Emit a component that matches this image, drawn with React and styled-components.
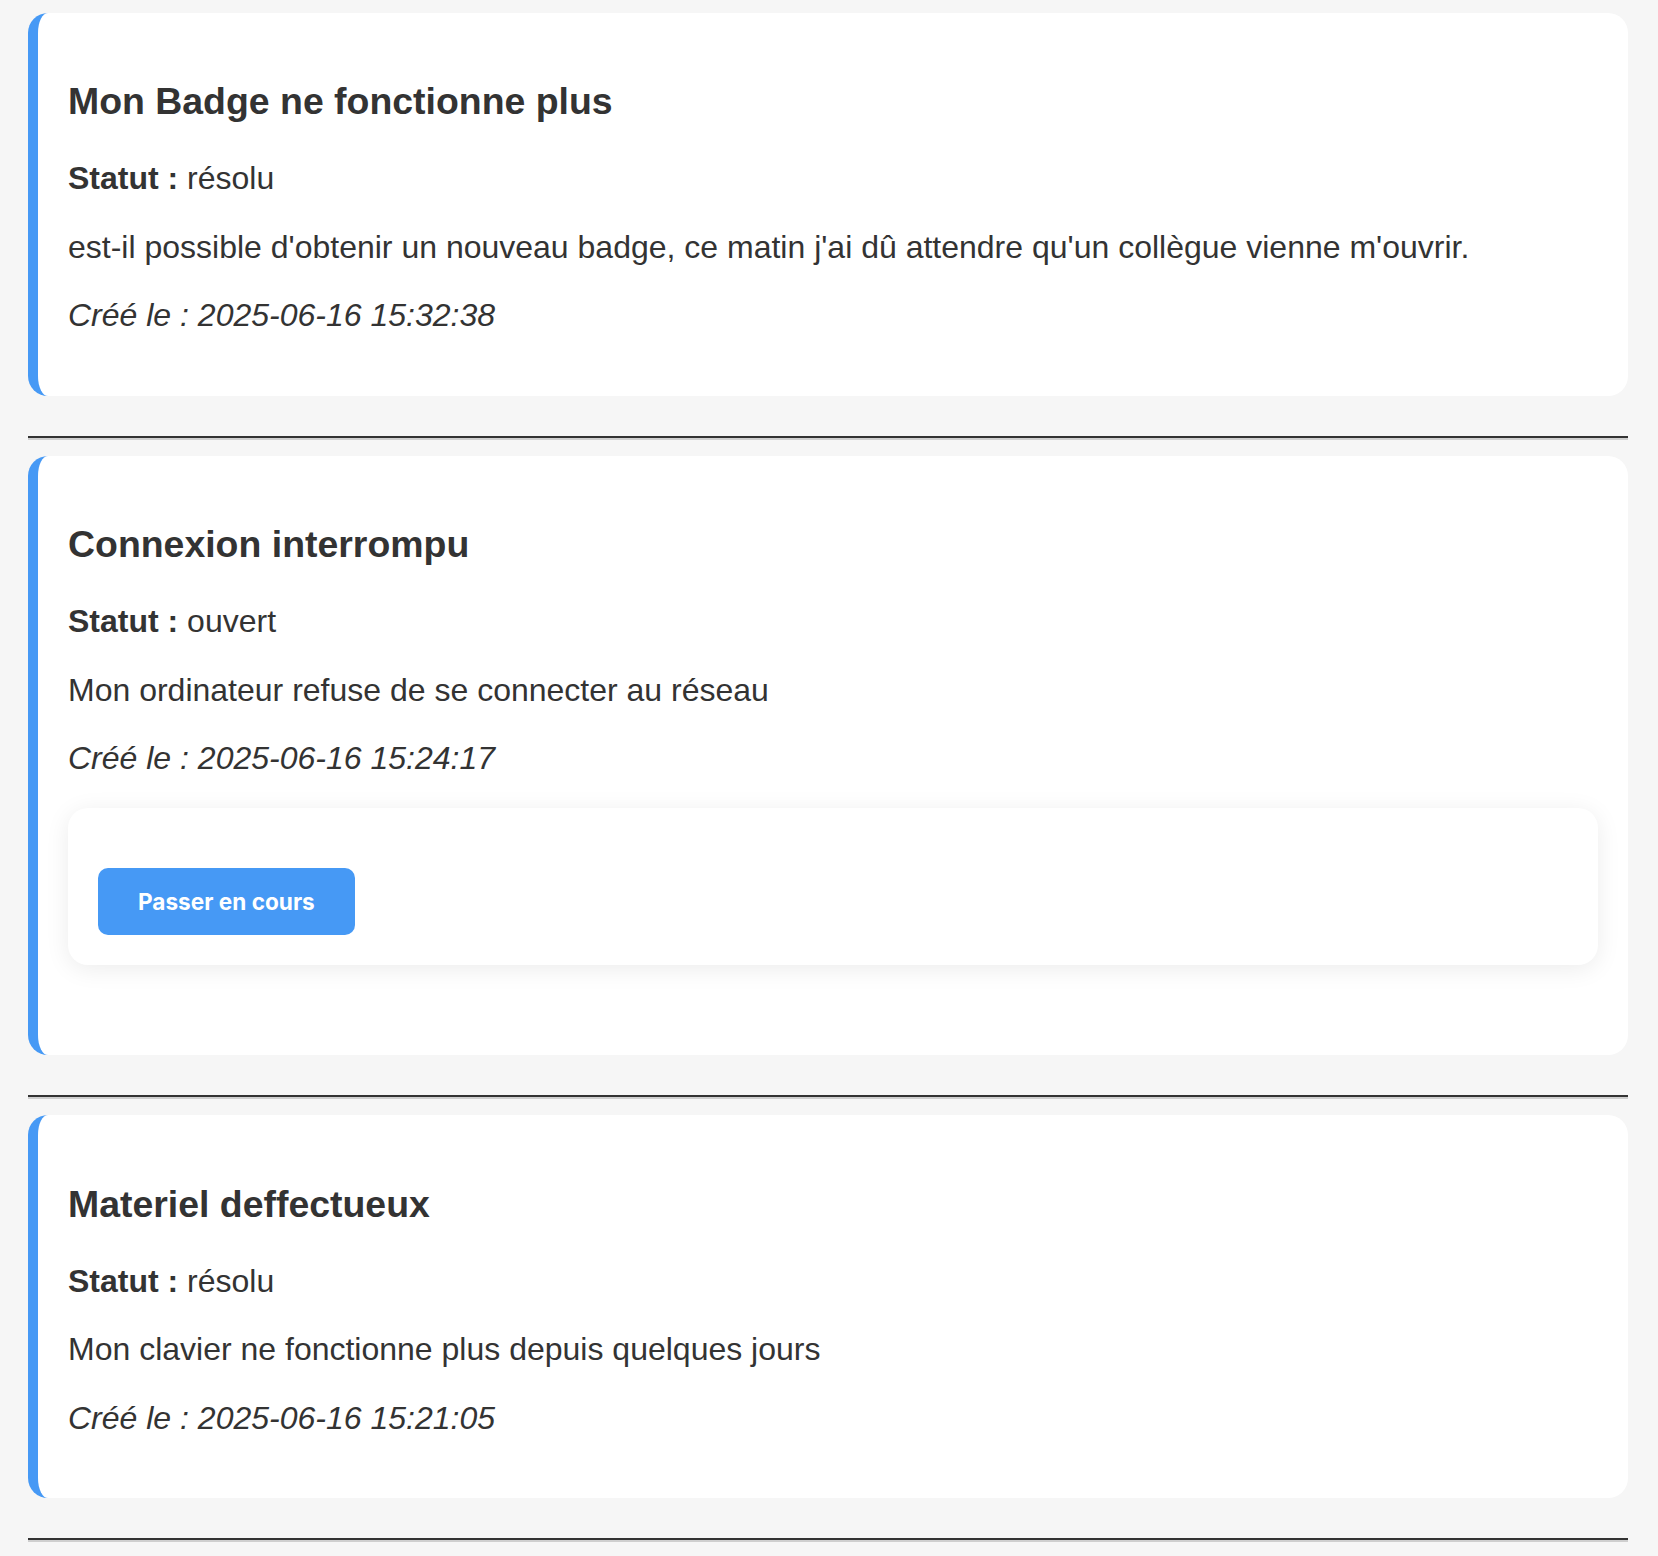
import React from "react";
import styled, { createGlobalStyle } from "styled-components";

const GlobalStyle = createGlobalStyle`
  html, body {
    margin: 0;
    padding: 0;
    background: #f6f6f6;
  }
  body {
    font-family: "Liberation Sans", Arial, Helvetica, sans-serif;
    color: #333;
  }
`;

const Page = styled.main`
  padding: 13px 30px 0 28px;
`;

const TicketCard = styled.article`
  background: #fff;
  border-left: 10px solid #4699f5;
  border-radius: 20px;
  padding: 30px;
  margin: 0 0 40px;
`;

const Title = styled.h3`
  font-size: 37.44px;
  line-height: 42.6px;
  font-weight: 700;
  margin: 37.44px 0;
  color: #333;
`;

const Line = styled.p`
  font-size: 32px;
  line-height: 36.4px;
  margin: 32px 0;
  font-style: ${(p) => (p.$italic ? "italic" : "normal")};
`;

const Label = styled.strong`
  font-weight: 700;
`;

const ActionBox = styled.div`
  display: flex;
  align-items: flex-start;
  background: #fff;
  border-radius: 20px;
  box-shadow: 0 4px 24px rgba(0, 0, 0, 0.08);
  padding: 60px 30px 30px;
  margin: 32px 0 60px;
`;

const ActionButton = styled.button`
  font-family: Inter, "Noto Sans", sans-serif;
  font-size: 22.6px;
  font-weight: 700;
  color: #fff;
  background: #4699f5;
  border: none;
  border-radius: 10px;
  padding: 20px 40px;
  cursor: pointer;
`;

const Divider = styled.hr`
  height: 0;
  border: 0;
  border-top: 2px solid #333;
  border-bottom: 2px solid #cfcfcf;
  margin: 16px 0;
`;

const tickets = [
  {
    id: 1,
    title: "Mon Badge ne fonctionne plus",
    status: "résolu",
    description:
      "est-il possible d'obtenir un nouveau badge, ce matin j'ai dû attendre qu'un collègue vienne m'ouvrir.",
    created: "2025-06-16 15:32:38",
  },
  {
    id: 2,
    title: "Connexion interrompu",
    status: "ouvert",
    description: "Mon ordinateur refuse de se connecter au réseau",
    created: "2025-06-16 15:24:17",
    action: "Passer en cours",
  },
  {
    id: 3,
    title: "Materiel deffectueux",
    status: "résolu",
    description: "Mon clavier ne fonctionne plus depuis quelques jours",
    created: "2025-06-16 15:21:05",
  },
];

export default function App() {
  return (
    <>
      <GlobalStyle />
      <Page>
        {tickets.map((t) => (
          <React.Fragment key={t.id}>
            <TicketCard>
              <Title>{t.title}</Title>
              <Line>
                <Label>Statut :</Label> {t.status}
              </Line>
              <Line>{t.description}</Line>
              <Line $italic>Créé le : {t.created}</Line>
              {t.action && (
                <ActionBox>
                  <ActionButton type="button">{t.action}</ActionButton>
                </ActionBox>
              )}
            </TicketCard>
            <Divider />
          </React.Fragment>
        ))}
      </Page>
    </>
  );
}
